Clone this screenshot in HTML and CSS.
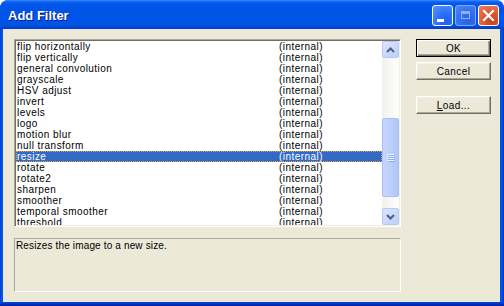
FILE: index.html
```html
<!DOCTYPE html>
<html lang="en">
<head>
  <meta charset="UTF-8" />
  <title>Add Filter</title>
  <link rel="stylesheet" href="styles.css">
</head>
<body>

  <div class="window">
    <div class="titlebar">
      <span class="title">Add Filter</span>
      <div class="caption-buttons">
        <div class="cap-btn cap-min"><span class="min-bar"></span></div>
        <div class="cap-btn cap-max disabled"><span class="max-box"></span></div>
        <div class="cap-btn cap-close">
          <svg width="13" height="13" viewBox="0 0 13 13">
            <path d="M2 2 L11 11 M11 2 L2 11" stroke="#fff" stroke-width="2.2" stroke-linecap="square" fill="none"/>
          </svg>
        </div>
      </div>
    </div>

    <div class="client">
      <div class="left-col">
        <div class="listbox">
          <div class="rows" id="filterRows"></div>
          <div class="vscroll">
            <div class="sb-btn">
              <svg width="9" height="6" viewBox="0 0 9 6"><path d="M1 5 L4.5 1.5 L8 5" stroke="#4d6185" stroke-width="2" fill="none"/></svg>
            </div>
            <div class="sb-track">
              <div class="sb-thumb">
                <span class="grip"></span><span class="grip"></span><span class="grip"></span><span class="grip"></span>
              </div>
            </div>
            <div class="sb-btn">
              <svg width="9" height="6" viewBox="0 0 9 6"><path d="M1 1 L4.5 4.5 L8 1" stroke="#4d6185" stroke-width="2" fill="none"/></svg>
            </div>
          </div>
        </div>
        <div class="desc">Resizes the image to a new size.</div>
      </div>

      <div class="buttons">
        <button type="button" class="dlg-button default">OK</button>
        <button type="button" class="dlg-button">Cancel</button>
        <button type="button" class="dlg-button load"><u>L</u>oad...</button>
      </div>
    </div>
  </div>

  <script>
    const filters = [
      "flip horizontally", "flip vertically", "general convolution", "grayscale",
      "HSV adjust", "invert", "levels", "logo", "motion blur", "null transform",
      "resize", "rotate", "rotate2", "sharpen", "smoother", "temporal smoother",
      "threshold"
    ];

    const rows = document.getElementById("filterRows");
    filters.forEach(function(name) {
      const row = document.createElement("div");
      row.className = "row" + (name === "resize" ? " selected" : "");
      row.innerHTML = `<span class="name">${name}</span><span class="source">(internal)</span>`;
      rows.appendChild(row);
    });
  </script>

</body>
</html>
```

FILE: styles.css
```css
html {
  background: #fff;
}

body {
  margin: 0;
  padding: 0;
  font-family: "Liberation Sans", Arial, sans-serif;
}

.window {
  width: 504px;
  height: 306px;
  box-sizing: border-box;
  padding: 0 4px 4px 3px;
  display: flex;
  flex-direction: column;
  background: linear-gradient(to right, #0831d9 0, #0055e5 1px, #0055e5 calc(100% - 2px), #0030c8 100%);
  border-radius: 8px 8px 0 0;
  overflow: hidden;
  position: relative;
}

.window::after {
  content: "";
  position: absolute;
  left: 0;
  right: 0;
  bottom: 0;
  height: 4px;
  background: linear-gradient(#0046d8, #001ea0);
}

.titlebar {
  height: 29px;
  margin: 0 -4px 0 -3px;
  padding: 0 5px 0 8px;
  display: flex;
  align-items: center;
  justify-content: space-between;
  background: linear-gradient(#3d8cff 0, #0a5ff0 2px, #0058ee 4px, #0054e3 10px, #0056e8 20px, #0052e0 25px, #0047d6 27px, #003bc8 29px);
  border-radius: 8px 8px 0 0;
}

.title {
  color: #fff;
  font-weight: bold;
  font-size: 13px;
  text-shadow: 1px 1px #0a1883;
  margin-top: 1px;
}

.caption-buttons {
  display: flex;
  gap: 2px;
  margin-top: 1px;
}

.cap-btn {
  width: 21px;
  height: 21px;
  box-sizing: border-box;
  border: 1px solid #fff;
  border-radius: 3px;
  background: radial-gradient(circle at 70% 80%, #1e5ff2 0, #2a70f8 40%, #5c93fb 100%);
  display: flex;
  align-items: center;
  justify-content: center;
  position: relative;
}

.cap-btn.disabled {
  border-color: #86a8f2;
  background: radial-gradient(circle at 70% 80%, #2563ec 0, #3271ee 50%, #4f86f0 100%);
}

.min-bar {
  position: absolute;
  left: 4px;
  top: 13px;
  width: 7px;
  height: 3px;
  background: #fff;
}

.max-box {
  width: 9px;
  height: 8px;
  box-sizing: border-box;
  border: 1px solid #8eaef3;
  border-top-width: 3px;
}

.cap-close {
  background: radial-gradient(circle at 70% 80%, #c4401e 0, #e05a32 45%, #ea8060 100%);
}

.client {
  flex: 1;
  background: #ece9d8;
  padding: 10px 0 0 11px;
  display: flex;
  gap: 15px;
}

.left-col {
  width: 387px;
  display: flex;
  flex-direction: column;
  gap: 11px;
}

.listbox {
  height: 188px;
  box-sizing: border-box;
  border: 1px solid;
  border-color: #aca899 #fff #fff #aca899;
  box-shadow: inset 1px 1px #716f64, inset -1px -1px #f1efe2;
  padding: 1px;
  background: #fff;
  display: flex;
}

.rows {
  flex: 1;
  overflow: hidden;
  font-size: 10px;
  letter-spacing: 0.45px;
  color: #000;
}

.row {
  height: 11px;
  line-height: 11px;
  display: grid;
  grid-template-columns: 262px 1fr;
  padding-left: 1px;
  white-space: nowrap;
  box-sizing: border-box;
}

.row.selected {
  background: #316ac5;
  color: #fff;
  outline: 1px dotted #e8a040;
  outline-offset: -1px;
}

.vscroll {
  width: 17px;
  display: flex;
  flex-direction: column;
  background: linear-gradient(to right, #f3f1ec, #fefefb);
}

.sb-btn {
  height: 17px;
  box-sizing: border-box;
  border: 1px solid #b7caf5;
  border-radius: 2px;
  background: linear-gradient(135deg, #dce6fd, #bccffb);
  display: flex;
  align-items: center;
  justify-content: center;
}

.sb-track {
  flex: 1;
  padding-top: 60px;
}

.sb-thumb {
  height: 79px;
  box-sizing: border-box;
  border: 1px solid #a9bff5;
  border-radius: 2px;
  background: linear-gradient(to right, #c6d6fc, #bacdfb 60%, #b0c6f8);
  display: flex;
  flex-direction: column;
  align-items: center;
  justify-content: center;
  gap: 1px;
}

.grip {
  width: 7px;
  height: 1px;
  background: #eef3fe;
  box-shadow: 1px 1px #8caaf0;
}

.desc {
  height: 54px;
  box-sizing: border-box;
  border: 1px solid;
  border-color: #aca899 #fff #fff #aca899;
  padding: 1px 0 0 1px;
  font-size: 10px;
  letter-spacing: 0.15px;
  line-height: 11px;
  color: #000;
}

.buttons {
  width: 75px;
  display: flex;
  flex-direction: column;
}

.dlg-button {
  width: 75px;
  height: 18px;
  box-sizing: border-box;
  margin: 0 0 5px;
  padding: 0;
  font-family: "Liberation Sans", Arial, sans-serif;
  font-size: 10px;
  letter-spacing: 0.4px;
  color: #000;
  background: #ece9d8;
  border: 1px solid;
  border-color: #fff #716f64 #716f64 #fff;
  box-shadow: inset -1px -1px #aca899, inset 1px 1px #f1efe2;
}

.dlg-button.default {
  border-color: #000;
  box-shadow: inset 1px 1px #fff, inset -1px -1px #716f64, inset -2px -2px #aca899;
}

.dlg-button.load {
  margin-top: 11px;
}
```
